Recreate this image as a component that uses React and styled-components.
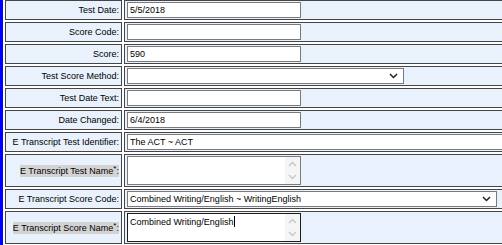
import styled, { createGlobalStyle } from "styled-components";

const GlobalStyle = createGlobalStyle`
    body {
        margin: 0;
        overflow: hidden;
        background: #ffffff;
        font-family: "Liberation Sans", Arial, sans-serif;
    }
`

const Page = styled.div`
    display: flex;
    align-items: flex-start;
    height: 100vh;
`

const BlueBar = styled.div`
    flex: none;
    align-self: stretch;
    width: 3px;
    background: #0000fe;
`

const FormTable = styled.table`
    flex: none;
    width: 640px;
    margin-top: -2px;
    border-collapse: separate;
    border-spacing: 2px;
    table-layout: fixed;
    font-size: 9px;
    color: #000;
`

const Cell = styled.td`
    box-sizing: border-box;
    border: 1px solid #454545;
    background: #e8f1fc;
    vertical-align: middle;
`

const LabelCell = styled(Cell)`
    width: 117px;
    padding: 0 2px 0 2px;
    text-align: right;
    white-space: nowrap;
`

const FieldCell = styled(Cell)`
    padding: 1px 2px;
`

// labels of required fields get a grey marker behind the text
const Required = styled.span`
    background: #d3d3d3;
    line-height: 12px;
    padding: 1px 0;

    sup {
        font-size: 8px;
        line-height: 0;
        vertical-align: 3px;
    }
`

const TextInput = styled.input`
    display: block;
    box-sizing: border-box;
    width: ${p => p.$width || "174px"};
    height: 16px;
    margin: 0;
    padding: 0 2px;
    border: 1px solid #7a7a7a;
    border-radius: 0;
    background: #fff;
    font: inherit;
    color: #000;
    outline: none;
`

const SelectBox = styled.div`
    display: flex;
    align-items: center;
    box-sizing: border-box;
    width: ${p => p.$width};
    height: 16px;
    border: 1px solid #7a7a7a;
    background: #fff;
`

const NativeSelect = styled.select`
    flex: 1;
    min-width: 0;
    height: 100%;
    margin: 0;
    padding: 0 0 0 2px;
    border: 0;
    appearance: none;
    background: transparent;
    font: inherit;
    color: #000;
    outline: none;
`

const Chevron = styled.svg`
    flex: none;
    width: 9px;
    height: 6px;
    margin-right: 5px;
`

const AreaBox = styled.div`
    display: flex;
    box-sizing: border-box;
    width: 174px;
    height: 29px;
    border: 1px solid ${p => (p.$focused ? "#1c1c1c" : "#7a7a7a")};
    background: #fff;
`

const AreaText = styled.div`
    flex: 1;
    padding: 2px 2px;
    line-height: 11px;
    white-space: pre-wrap;
`

const Caret = styled.span`
    display: inline-block;
    width: 1px;
    height: 11px;
    margin-left: 1px;
    vertical-align: -2px;
    background: #000;
`

const ScrollTrack = styled.div`
    flex: none;
    display: flex;
    flex-direction: column;
    justify-content: space-between;
    align-items: center;
    width: 15px;
    padding: 4px 0 4px;
    background: #f5f5f5;
`

const ScrollArrow = styled.svg`
    width: 9px;
    height: 6px;
`

function DownChevron() {
    return (
        <Chevron viewBox="0 0 9 6">
            <polyline points="1,1 4.5,4.5 8,1" fill="none" stroke="#222" strokeWidth="1.5" />
        </Chevron>
    );
}

function Select({ width, value }) {
    return (
        <SelectBox $width={width}>
            <NativeSelect value={value} onChange={() => {}}>
                <option value={value}>{value}</option>
            </NativeSelect>
            <DownChevron />
        </SelectBox>
    );
}

function TextArea({ text, focused }) {
    return (
        <AreaBox $focused={focused}>
            <AreaText>
                {text}
                {focused ? <Caret /> : null}
            </AreaText>
            <ScrollTrack>
                <ScrollArrow viewBox="0 0 9 6">
                    <polyline points="1,5 4.5,1.5 8,5" fill="none" stroke="#c6c6c6" strokeWidth="1.3" />
                </ScrollArrow>
                <ScrollArrow viewBox="0 0 9 6">
                    <polyline points="1,1 4.5,4.5 8,1" fill="none" stroke="#c6c6c6" strokeWidth="1.3" />
                </ScrollArrow>
            </ScrollTrack>
        </AreaBox>
    );
}

const fields = [
    { label: "Test Date:", kind: "text", value: "5/5/2018" },
    { label: "Score Code:", kind: "text", value: "" },
    { label: "Score:", kind: "text", value: "590" },
    { label: "Test Score Method:", kind: "select", value: "", width: "277px" },
    { label: "Test Date Text:", kind: "text", value: "" },
    { label: "Date Changed:", kind: "text", value: "6/4/2018" },
    { label: "E Transcript Test Identifier:", kind: "text", value: "The ACT ~ ACT", width: "100%" },
    { label: "E Transcript Test Name", required: true, kind: "area", value: "" },
    { label: "E Transcript Score Code:", kind: "select", value: "Combined Writing/English ~ WritingEnglish", width: "370px" },
    { label: "E Transcript Score Name", required: true, kind: "area", value: "Combined Writing/English", focused: true },
    { label: "", kind: "text", value: "" },
];

function App() {
    return (
        <>
            <GlobalStyle />
            <Page>
                <BlueBar />
                <FormTable>
                    <tbody>
                        {fields.map((f, i) => (
                            <tr key={i}>
                                <LabelCell>
                                    {f.required ? (
                                        <Required>{f.label}<sup>*</sup>:</Required>
                                    ) : f.label}
                                </LabelCell>
                                <FieldCell>
                                    {f.kind === "text" && (
                                        <TextInput $width={f.width} value={f.value} readOnly />
                                    )}
                                    {f.kind === "select" && <Select width={f.width} value={f.value} />}
                                    {f.kind === "area" && <TextArea text={f.value} focused={f.focused} />}
                                </FieldCell>
                            </tr>
                        ))}
                    </tbody>
                </FormTable>
            </Page>
        </>
    );
}

export default App;
